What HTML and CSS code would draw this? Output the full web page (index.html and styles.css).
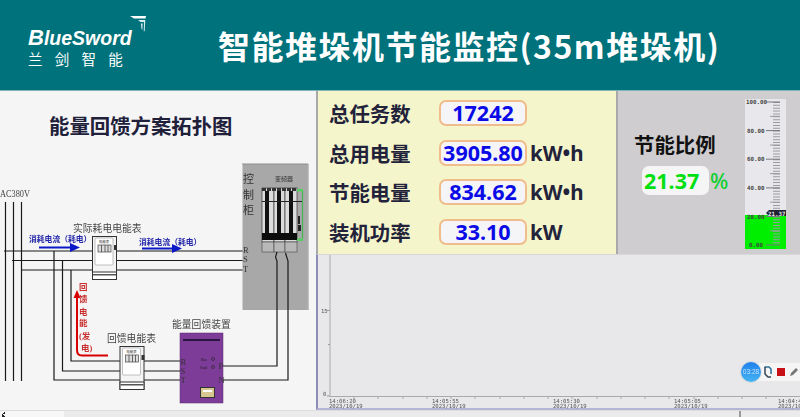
FILE: index.html
```html
<!DOCTYPE html>
<html lang="en">
<head>
    <meta charset="UTF-8">
    <meta name="viewport" content="width=device-width, initial-scale=1.0">
    <title>智能堆垛机节能监控</title>
    <link rel="stylesheet" href="styles.css">
</head>
<body>
    <header class="top-bar">
        <div class="logo">
            <svg class="logo-mark" viewBox="0 0 16 16" width="16" height="16">
                <path d="M0 0H16L15.500 2.500H4Z" fill="#fff"/>
                <path d="M8 4H15.300L14.700 15L13.800 15.500L14 6L10.500 6Z" fill="#d8ecec"/>
                <path d="M11 7.500H12.500L12.300 14L11.600 13Z" fill="#fff"/>
            </svg>
            <div class="logo-name"><span class="logo-cap">B</span>lueSword</div>
            <div class="logo-sub">兰 剑 智 能</div>
        </div>
        <h1 class="page-title">智能堆垛机节能监控(35m堆垛机)</h1>
    </header>

    <main class="board">
        <section class="topology">
            <h2 class="topology-title">能量回馈方案拓扑图</h2>
            <svg class="diagram" viewBox="0 0 316 319" width="316" height="319">
                <defs>
                    <g id="meter">
                        <rect x="0.500" y="0.500" width="24" height="43" fill="#f4f4f4" stroke="#333"/>
                        <rect x="0.500" y="36" width="24" height="7.500" fill="#fff" stroke="#333"/>
                        <rect x="1" y="38" width="23" height="1.500" fill="#555"/>
                        <rect x="3" y="2" width="18" height="27" rx="1" fill="#fff" stroke="#999" stroke-width=".6"/>
                        <text class="tiny" x="12" y="7" text-anchor="middle">电能表</text>
                        <rect x="6" y="9" width="13" height="7" fill="#ddd" stroke="#444" stroke-width=".7"/>
                        <path d="M9.500 9V16M13 9V16M16 9V16" stroke="#444" stroke-width=".8"/>
                        <rect x="22" y="9" width="3" height="5" fill="#333"/>
                    </g>
                </defs>

                <text class="serif" x="0" y="106" textLength="30" lengthAdjust="spacingAndGlyphs">AC380V</text>

                <!-- bus lines -->
                <path class="wire" d="M5.500 111V290M13.500 111V290M21.500 111V290"/>
                <path class="wire" d="M4 160H243M12 169.500H243M21 179H243"/>
                <path class="wire" d="M54 160V289H120M62.500 169.500V280H120M71 179V270H120"/>
                <path class="wire" d="M144 270H181M144 280H181M144 289H181"/>

                <!-- cabinet -->
                <rect x="242.500" y="73" width="65" height="146" fill="#a8a8a8"/>
                <path d="M242 73H308V219" fill="none" stroke="#8c8c8c"/>
                <text class="cabinet-text" x="243" y="92">控</text>
                <text class="cabinet-text" x="243" y="108">制</text>
                <text class="cabinet-text" x="243" y="123">柜</text>
                <text class="tiny-label" x="275" y="90">变频器</text>
                <g class="drive">
                    <rect x="262" y="97" width="12" height="54"/>
                    <rect x="274" y="97" width="11" height="54"/>
                    <rect x="285" y="97" width="12" height="54"/>
                </g>
                <path d="M262 98.500H297" stroke="#333" stroke-width="3" stroke-dasharray="4 1"/>
                <path d="M267 100V142M279 100V142M291 100V142" stroke="#111" stroke-width="4"/>
                <path d="M262 110.500H303" stroke="#222"/>
                <rect x="262" y="142" width="35" height="7" fill="#0c0c0c"/>
                <path d="M298.500 99H302.500V149H298.500" stroke="#43b653" stroke-width="1.200" fill="none"/>
                <rect x="297" y="98" width="6" height="2.500" fill="#53d060"/>
                <rect x="297" y="147.500" width="6" height="2.500" fill="#53d060"/>
                <rect x="298" y="125" width="2" height="8" fill="#222"/>
                <rect x="298" y="134" width="3" height="6" fill="#222"/>
                <rect x="262" y="151" width="12" height="10" fill="#b8b8b8" stroke="#444" stroke-width=".6"/>
                <rect x="274" y="151" width="11" height="10" fill="#b8b8b8" stroke="#444" stroke-width=".6"/>
                <rect x="285" y="151" width="12" height="10" fill="#b8b8b8" stroke="#444" stroke-width=".6"/>
                <text class="phase" x="243" y="162">R</text>
                <text class="phase" x="243" y="171">S</text>
                <text class="phase" x="243" y="181">T</text>

                <!-- device output -->
                <path class="wire" d="M223 275H277V170L275.500 166L277 161M223 289H288V170L285.500 162"/>

                <use href="#meter" x="92" y="145"/>
                <use href="#meter" x="119.500" y="255"/>

                <text class="serif" x="73" y="140.500">实际耗电电能表</text>
                <text class="serif" x="107" y="250.500">回馈电能表</text>
                <text class="serif" x="172" y="236.500">能量回馈装置</text>

                <text class="flow-blue" x="29" y="151">消耗电流（耗电）</text>
                <text class="flow-blue" x="139" y="154">消耗电流（耗电）</text>
                <path d="M39 156.500H72" stroke="#0b18c8" stroke-width="2"/>
                <path d="M70 152L80 156.500L70 161Z" fill="#0b18c8"/>
                <path d="M142 157.500H174" stroke="#0b18c8" stroke-width="2"/>
                <path d="M172 153L182 157.500L172 162Z" fill="#0b18c8"/>

                <path d="M108 264.500H82Q77 264.500 77 259V205" fill="none" stroke="#d80000" stroke-width="2"/>
                <path d="M73.500 207L77 199L80.500 207Z" fill="#d80000"/>
                <text class="flow-red" x="79" y="199">回</text>
                <text class="flow-red" x="79" y="211">馈</text>
                <text class="flow-red" x="79" y="224">电</text>
                <text class="flow-red" x="79" y="235">能</text>
                <text class="flow-red" x="79" y="248">(发</text>
                <text class="flow-red" x="81" y="260">电)</text>

                <!-- feedback device -->
                <rect x="180" y="242" width="43" height="70" fill="#7d3c98" stroke="#5d2b75" stroke-width=".5"/>
                <rect x="183" y="248" width="37" height="2" fill="#2a1640"/>
                <text class="phase" x="180.500" y="274">R</text>
                <text class="phase" x="180.500" y="283">S</text>
                <text class="phase" x="180.500" y="292">T</text>
                <text class="phase" x="218.500" y="278">P</text>
                <text class="phase" x="218.500" y="292">N</text>
                <text class="tiny-dark" x="201" y="270">Run</text>
                <text class="tiny-dark" x="200" y="278">Fault</text>
                <circle cx="213" cy="268" r="1.500" fill="none" stroke="#222" stroke-width=".6"/>
                <circle cx="213" cy="276" r="1.500" fill="none" stroke="#222" stroke-width=".6"/>
                <rect x="200.500" y="296.500" width="14" height="10" fill="#d8c690" stroke="#333"/>
                <rect x="203" y="299" width="9" height="2" fill="#fff"/>
            </svg>
        </section>

        <div class="content">
            <div class="summary">
                <section class="stats">
                    <div class="stat-row">
                        <span class="stat-name">总任务数</span>
                        <span class="stat-value">17242</span>
                    </div>
                    <div class="stat-row">
                        <span class="stat-name">总用电量</span>
                        <span class="stat-value">3905.80</span>
                        <span class="stat-unit">kW•h</span>
                    </div>
                    <div class="stat-row">
                        <span class="stat-name">节能电量</span>
                        <span class="stat-value">834.62</span>
                        <span class="stat-unit">kW•h</span>
                    </div>
                    <div class="stat-row">
                        <span class="stat-name">装机功率</span>
                        <span class="stat-value">33.10</span>
                        <span class="stat-unit">kW</span>
                    </div>
                </section>

                <section class="ratio">
                    <div class="ratio-info">
                        <div class="ratio-name">节能比例</div>
                        <div class="ratio-line">
                            <span class="ratio-value">21.37</span>
                            <span class="ratio-unit">%</span>
                        </div>
                    </div>
                    <svg class="gauge" viewBox="0 0 41 150" width="41" height="150">
                        <rect width="41" height="150" fill="#e8e8ec"/>
                        <rect y="116" width="41" height="34" fill="#00ee00"/>
                        <path d="M31.500 3V146" stroke="#9a9aa0" stroke-width="7" stroke-dasharray="1 1.860" fill="none"/>
                        <path d="M25 17.300H35M25 46H35M25 74.600H35M25 103.200H35M25 131.800H35" stroke="#9a9aa0"/>
                        <path d="M21 3H35M21 31.600H35M21 60.200H35M21 88.900H35M21 117.500H35M21 146H35" stroke="#77777d"/>
                        <text class="gauge-text" x="1" y="5">100.00</text>
                        <text class="gauge-text" x="2" y="34">80.00</text>
                        <text class="gauge-text" x="2" y="62">60.00</text>
                        <text class="gauge-text" x="2" y="91">40.00</text>
                        <text class="gauge-text" x="2" y="120">20.00</text>
                        <text class="gauge-text" x="4" y="148">0.00</text>
                        <path d="M21 114L24 111H41V117H24Z" fill="#1f2333"/>
                        <text class="gauge-mark" x="23" y="116.500">21.37</text>
                    </svg>
                </section>
            </div>

            <section class="chart">
                <svg class="chart-plot" viewBox="0 0 482 153" width="482" height="153">
                    <path d="M12 0V141.500H482" fill="none" stroke="#aaa" stroke-width="1"/>
                    <path d="M9 55.500H12M10 89.500H12M9 141H12" stroke="#999"/>
                    <path d="M36 141V144M60 141V144M85 141V144M109 141V144M133 141V144M157 141V144M182 141V144M206 141V144M230 141V144M254 141V144M279 141V144M303 141V144M327 141V144M351 141V144M376 141V144M400 141V144M424 141V144M448 141V144" stroke="#aaa"/>
                    <text class="axis-text" x="3" y="57.500">15</text>
                    <text class="axis-text" x="5" y="141">0</text>
                    <text class="axis-text" x="11" y="147.500">14:06:20</text>
                    <text class="axis-text" x="11" y="153">2023/10/19</text>
                    <text class="axis-text" x="114" y="147.500">14:05:55</text>
                    <text class="axis-text" x="114" y="153">2023/10/19</text>
                    <text class="axis-text" x="235" y="147.500">14:05:30</text>
                    <text class="axis-text" x="235" y="153">2023/10/19</text>
                    <text class="axis-text" x="356" y="147.500">14:05:05</text>
                    <text class="axis-text" x="356" y="153">2023/10/19</text>
                    <text class="axis-text" x="460" y="147.500">14:04:40</text>
                    <text class="axis-text" x="460" y="153">2023/10/19</text>
                </svg>
                <div class="recorder">
                    <div class="recorder-time">03:28</div>
                    <svg class="recorder-icon" viewBox="0 0 10 12" width="10" height="12">
                        <path d="M1.500 1H6L8 3V8" fill="none" stroke="#2b6f96" stroke-width="1.500"/>
                        <path d="M2 1V8L5 11H8" fill="none" stroke="#345" stroke-width="1.500"/>
                    </svg>
                    <div class="recorder-stop"></div>
                    <svg class="recorder-icon" viewBox="0 0 10 10" width="10" height="10">
                        <path d="M1 9L2 6L7 1L9 3L4 8Z" fill="#777"/>
                    </svg>
                </div>
            </section>
        </div>
    </main>

    <footer class="status-strip">
        <div class="scroll-arrow"></div>
        <div class="scroll-thumb"></div>
        <div class="scroll-rest"></div>
    </footer>
</body>
</html>
```

FILE: styles.css
```css
* {
    box-sizing: border-box;
}

html, body {
    margin: 0;
    padding: 0;
}

body {
    width: 800px;
    height: 417px;
    overflow: hidden;
    font-family: "Noto Sans CJK SC", "Noto Sans", sans-serif;
    background-color: #e9e9e9;
}

.top-bar {
    display: flex;
    align-items: center;
    height: 91px;
    background-color: #00727b;
    border-bottom: 1px solid #7fb4b8;
    color: #fff;
}

.logo {
    position: relative;
    width: 218px;
    padding: 27px 0 0 28px;
    height: 90px;
}

.logo-mark {
    position: absolute;
    left: 130px;
    top: 16px;
}

.logo-name {
    font-family: "Liberation Sans", sans-serif;
    font-size: 19.500px;
    font-weight: bold;
    font-style: italic;
    line-height: 22px;
    white-space: nowrap;
}

.logo-cap {
    font-size: 22px;
}

.logo-sub {
    font-size: 14.500px;
    line-height: 20px;
    letter-spacing: 4.500px;
    white-space: nowrap;
}

.page-title {
    margin: 0;
    font-size: 32px;
    font-weight: bold;
    letter-spacing: 1.500px;
    white-space: nowrap;
    line-height: 40px;
}

.board {
    display: flex;
    height: 319px;
}

.topology {
    width: 316px;
    height: 319px;
    position: relative;
    background-color: #f5f5f5;
}

.topology-title {
    position: absolute;
    left: 49px;
    top: 20px;
    margin: 0;
    font-size: 20.400px;
    font-weight: bold;
    line-height: 28px;
    color: #20203a;
    white-space: nowrap;
}

.diagram {
    display: block;
    filter: blur(0.35px);
}

.diagram text {
    font-family: "Liberation Serif", "Noto Sans CJK SC", serif;
}

.wire {
    fill: none;
    stroke: #1a1a1a;
    stroke-width: 1.200;
}

.drive rect {
    fill: #dcdcdc;
    stroke: #222;
    stroke-width: 0.600;
}

.serif {
    font-size: 9.800px;
    fill: #444;
}

.phase {
    font-size: 8.500px;
    fill: #333;
}

.cabinet-text {
    font-size: 11px;
    fill: #333;
}

.tiny-label {
    font-size: 6px;
    fill: #333;
}

.tiny {
    font-size: 3.500px;
    fill: #333;
}

.tiny-dark {
    font-size: 3.500px;
    fill: #222;
}

.flow-blue {
    font-size: 7.800px;
    font-weight: bold;
    fill: #2226a8;
}

.flow-red {
    font-size: 8.500px;
    font-weight: bold;
    fill: #c83030;
}

.content {
    flex: 1;
    display: flex;
    flex-direction: column;
}

.summary {
    display: flex;
    height: 163px;
}

.stats {
    display: flex;
    flex-direction: column;
    gap: 13.500px;
    width: 302px;
    padding: 9px 0 0 11px;
    background-color: #f5f5cb;
    border-left: 2px solid #a9a9a9;
    border-right: 2px solid #a9a9a9;
}

.stat-row {
    display: flex;
    align-items: center;
    height: 26px;
}

.stat-name {
    width: 110px;
    font-size: 20.400px;
    font-weight: bold;
    color: #22223a;
    line-height: 26px;
}

.stat-value {
    width: 88px;
    height: 26px;
    text-align: center;
    font-family: "Noto Sans", sans-serif;
    font-size: 21.500px;
    font-weight: bold;
    line-height: 22px;
    color: #0a0ae6;
    background-color: #f5f5f8;
    border: 2px solid #f0bc8c;
    border-radius: 7px;
    white-space: nowrap;
}

.stat-unit {
    margin-left: 3px;
    font-family: "Noto Sans", sans-serif;
    font-size: 20.500px;
    font-weight: bold;
    color: #22223a;
}

.ratio {
    position: relative;
    flex: 1;
    background-color: #cfcdcf;
    padding-top: 8px;
}

.ratio-info {
    position: absolute;
    left: 16px;
    top: 39px;
}

.ratio-name {
    font-size: 20.400px;
    font-weight: bold;
    line-height: 28px;
    color: #111;
    white-space: nowrap;
}

.ratio-line {
    display: flex;
    align-items: center;
    margin: 8px 0 0 8px;
}

.ratio-value {
    width: 67px;
    height: 29px;
    padding-left: 2px;
    font-family: "Noto Sans", sans-serif;
    font-size: 21.500px;
    font-weight: bold;
    line-height: 29px;
    color: #00e010;
    background-color: #f5f5f5;
    border-radius: 7px;
}

.ratio-unit {
    margin-left: 1px;
    font-family: "Noto Sans", sans-serif;
    font-size: 21.500px;
    font-weight: 500;
    color: #10d030;
}

.gauge {
    display: block;
    margin-left: 127px;
}

.gauge-text {
    font-family: "DejaVu Sans Mono", monospace;
    font-size: 5.800px;
    font-weight: bold;
    fill: #444;
}

.gauge-mark {
    font-family: "DejaVu Sans Mono", monospace;
    font-size: 5.800px;
    font-weight: bold;
    fill: #e8e8e8;
}

.chart {
    position: relative;
    flex: 1;
    background-color: #e8e8ea;
    border-top: 1px solid #d8d8d8;
    border-left: 2px solid #8d8db8;
    border-bottom: 2px solid #b4b4d6;
}

.chart-plot {
    display: block;
    overflow: visible;
    filter: blur(0.3px);
}

.axis-text {
    font-family: "DejaVu Sans Mono", monospace;
    font-size: 5.600px;
    fill: #555;
}

.recorder {
    position: absolute;
    right: 0;
    top: 108px;
    display: flex;
    align-items: center;
    gap: 4px;
    height: 18px;
    width: 55px;
    background-color: #f5f5f5;
    border-radius: 9px 0 0 9px;
}

.recorder-time {
    flex: none;
    width: 20px;
    height: 20px;
    margin-left: -4px;
    margin-right: -2px;
    border-radius: 50%;
    background: linear-gradient(#1f80ec, #46b4f2);
    box-shadow: 0 0 2px #bbb;
    font-family: "Liberation Sans", sans-serif;
    font-size: 6.500px;
    line-height: 20px;
    text-align: center;
    color: #bfe2fa;
}

.recorder-stop {
    flex: none;
    width: 8px;
    height: 8px;
    background-color: #c81018;
}

.recorder-icon {
    flex: none;
}

.status-strip {
    display: flex;
    height: 7px;
    background-color: #ebebeb;
    border-top: 1px solid #ddd;
}

.scroll-arrow {
    width: 7px;
    height: 6px;
    background-color: #f4f4f4;
    background-image: linear-gradient(135deg, transparent 50%, #222 50%), linear-gradient(45deg, #222 50%, transparent 50%);
    background-size: 3px 3px;
    background-position: 2px 0, 2px 3px;
    background-repeat: no-repeat;
}

.scroll-thumb {
    width: 57px;
    background-color: #f7f7f7;
}

.scroll-rest {
    width: 677px;
    border-right: 2px solid #999;
}
```
